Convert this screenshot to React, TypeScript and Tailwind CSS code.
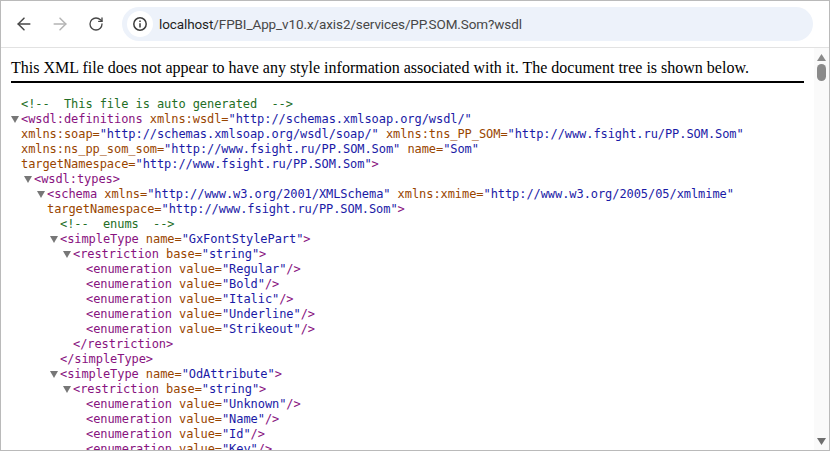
import React from "react";
import { ArrowLeft, ArrowRight, RotateCw } from "lucide-react";

const Tag = ({ children }: { children: React.ReactNode }) => <span className="text-[#881280]">{children}</span>;
const AN = ({ n, v }: { n: string; v: string }) => (
  <>
    <span className="text-[#994500]">{n}=</span>
    <span className="text-[#1a1aa6]">"{v}"</span>
  </>
);
const A = ({ n, v }: { n: string; v: string }) => (
  <>
    {" "}
    <AN n={n} v={v} />
  </>
);
const Tri = () => (
  <svg className="absolute -left-[10px] top-[4px]" width="8" height="7" viewBox="0 0 8 7">
    <path d="M0 0H8L4 7Z" fill="#777777" />
  </svg>
);

const L = ({ pad, tri, children }: { pad: string; tri?: boolean; children: React.ReactNode }) => (
  <div className={`${pad} h-[15px]`}>
    <span className="relative">
      {tri && <Tri />}
      {children}
    </span>
  </div>
);

const enums = (names: string[]) =>
  names.map((x) => (
    <L key={x} pad="pl-[75px]">
      <Tag>{"<enumeration"}</Tag>
      <A n="value" v={x} />
      <Tag>{"/>"}</Tag>
    </L>
  ));

export default function App() {
  return (
    <div className="w-[830px] h-[451px] overflow-hidden bg-white border border-[#bababa] flex flex-col">
      <div className="h-[47px] shrink-0 flex items-center border-b border-[#e2e2e2] pl-[7px] pr-[16px] text-[#474747]">
        <div className="w-[32px] flex justify-center"><ArrowLeft size={20} strokeWidth={1.8} /></div>
        <div className="w-[40px] flex justify-center text-[#b4b4b4]"><ArrowRight size={20} strokeWidth={1.8} /></div>
        <div className="w-[32px] flex justify-center"><RotateCw size={16} strokeWidth={2} /></div>
        <div className="ml-[10px] flex-1 h-[34px] rounded-full bg-[#edf2fa] flex items-center pl-[5px]">
          <div className="w-[26px] h-[26px] rounded-full bg-white flex items-center justify-center">
            <svg width="16" height="16" viewBox="0 0 16 16" fill="none" stroke="#3c3c3c">
              <circle cx="8" cy="8" r="6.2" strokeWidth="1.5" />
              <path d="M8 7.2V11.4M8 4.6V6" strokeWidth="1.5" />
            </svg>
          </div>
          <span className="ml-[6px] pt-[1px] text-[13.5px] tracking-[-0.1px] text-[#474747] font-['Roboto',sans-serif]">
            <span className="text-[#1f1f1f]">localhost</span>/FPBI_App_v10.x/axis2/services/PP.SOM.Som?wsdl
          </span>
        </div>
      </div>
      <div className="flex-1 min-h-0 flex">
        <div className="flex-1 min-w-0 overflow-hidden pl-[10px] pr-[10px]">
          <div className="h-[35px] pt-[8px] border-b-2 border-black font-['Liberation_Serif',serif] text-[16px] leading-[24px] text-black whitespace-nowrap">
            This XML file does not appear to have any style information associated with it. The document tree is shown below.
          </div>
          <div className="pt-[14px] font-['DejaVu_Sans_Mono',monospace] text-[12px] leading-[15px] tracking-[-0.07px] whitespace-pre">
            <L pad="pl-[10px]"><span className="text-[#236e25]">{"<!--  This file is auto generated  -->"}</span></L>
            <L pad="pl-[10px]" tri><Tag>{"<wsdl:definitions"}</Tag><A n="xmlns:wsdl" v="http://schemas.xmlsoap.org/wsdl/" /></L>
            <L pad="pl-[10px]"><AN n="xmlns:soap" v="http://schemas.xmlsoap.org/wsdl/soap/" /><A n="xmlns:tns_PP_SOM" v="http://www.fsight.ru/PP.SOM.Som" /></L>
            <L pad="pl-[10px]"><AN n="xmlns:ns_pp_som_som" v="http://www.fsight.ru/PP.SOM.Som" /><A n="name" v="Som" /></L>
            <L pad="pl-[10px]"><AN n="targetNamespace" v="http://www.fsight.ru/PP.SOM.Som" /><Tag>{">"}</Tag></L>
            <L pad="pl-[23px]" tri><Tag>{"<wsdl:types>"}</Tag></L>
            <L pad="pl-[36px]" tri><Tag>{"<schema"}</Tag><A n="xmlns" v="http://www.w3.org/2001/XMLSchema" /><A n="xmlns:xmime" v="http://www.w3.org/2005/05/xmlmime" /></L>
            <L pad="pl-[36px]"><AN n="targetNamespace" v="http://www.fsight.ru/PP.SOM.Som" /><Tag>{">"}</Tag></L>
            <L pad="pl-[49px]"><span className="text-[#236e25]">{"<!--  enums  -->"}</span></L>
            <L pad="pl-[49px]" tri><Tag>{"<simpleType"}</Tag><A n="name" v="GxFontStylePart" /><Tag>{">"}</Tag></L>
            <L pad="pl-[62px]" tri><Tag>{"<restriction"}</Tag><A n="base" v="string" /><Tag>{">"}</Tag></L>
            {enums(["Regular", "Bold", "Italic", "Underline", "Strikeout"])}
            <L pad="pl-[62px]"><Tag>{"</restriction>"}</Tag></L>
            <L pad="pl-[49px]"><Tag>{"</simpleType>"}</Tag></L>
            <L pad="pl-[49px]" tri><Tag>{"<simpleType"}</Tag><A n="name" v="OdAttribute" /><Tag>{">"}</Tag></L>
            <L pad="pl-[62px]" tri><Tag>{"<restriction"}</Tag><A n="base" v="string" /><Tag>{">"}</Tag></L>
            {enums(["Unknown", "Name", "Id", "Key"])}
          </div>
        </div>
        <div className="w-[15px] shrink-0 bg-[#fafafa] flex flex-col items-center">
          <svg className="mt-[6px]" width="9" height="7" viewBox="0 0 9 7"><path d="M4.5 0L9 7H0Z" fill="#8a8a8a" /></svg>
          <div className="mt-[3px] w-[9px] h-[17px] rounded-full bg-[#8a8a8a]" />
          <div className="flex-1" />
          <svg className="mb-[5px]" width="9" height="7" viewBox="0 0 9 7"><path d="M0 0H9L4.5 7Z" fill="#6e6e6e" /></svg>
        </div>
      </div>
    </div>
  );
}
